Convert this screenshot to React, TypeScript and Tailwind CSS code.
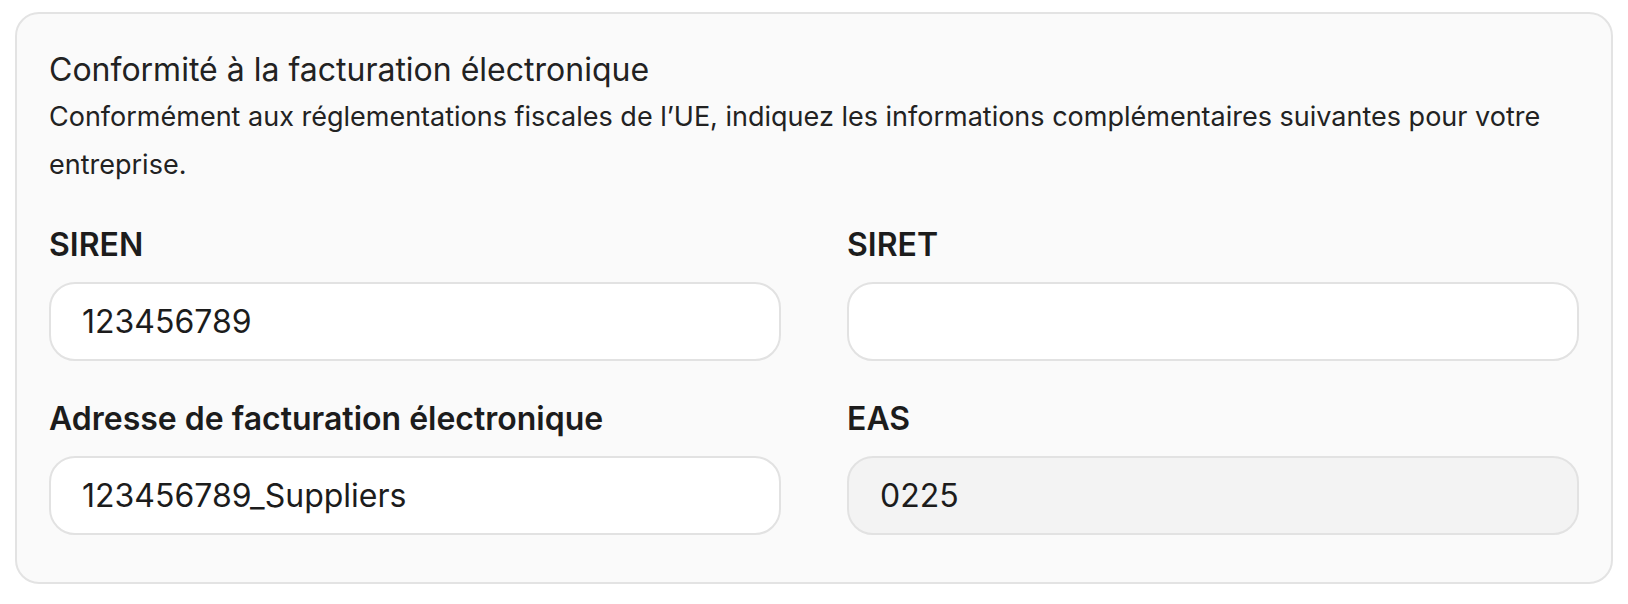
import React from 'react';

type FieldProps = {
  label: string;
  value?: string;
  disabled?: boolean;
};

const Field = ({ label, value = '', disabled = false }: FieldProps) => {
  return (
    <div className="flex flex-col">
      <label className="text-[32px] leading-[36px] font-semibold text-[#1c1c1c]">{label}</label>
      <input
        type="text"
        defaultValue={value}
        disabled={disabled}
        className={`mt-[19px] h-[79px] w-full rounded-[26px] border-2 border-[#e2e2e2] px-[31px] text-[32px] text-[#1c1c1c] outline-none ${
          disabled ? 'bg-[#f3f3f3]' : 'bg-white'
        }`}
      />
    </div>
  );
};

const App = () => {
  return (
    <div className="min-h-screen bg-white px-[15px] pt-[12px] font-['Inter',sans-serif]">
      <div className="rounded-[24px] border-2 border-[#e3e3e3] bg-[#fafafa] px-[32px] pt-[36px] pb-[47px]">
        <h2 className="text-[32px] leading-[40px] font-normal text-[#222]">Conformité à la facturation électronique</h2>
        <p className="mt-[3px] text-[27px] leading-[48px] text-[#222]">
          Conformément aux réglementations fiscales de l’UE, indiquez les informations complémentaires suivantes pour votre
          entreprise.
        </p>
        <div className="mt-[38px] grid grid-cols-2 gap-x-[66px] gap-y-[40px]">
          <Field label="SIREN" value="123456789" />
          <Field label="SIRET" />
          <Field label="Adresse de facturation électronique" value="123456789_Suppliers" />
          <Field label="EAS" value="0225" disabled />
        </div>
      </div>
    </div>
  );
};

export default App;
